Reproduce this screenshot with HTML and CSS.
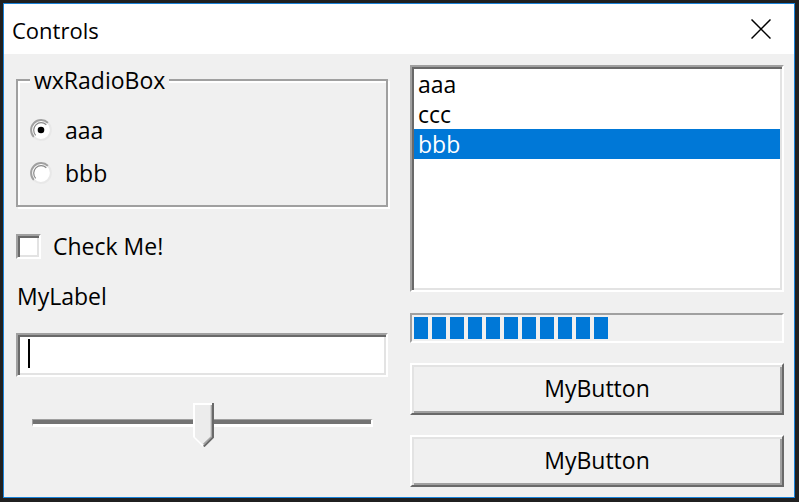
FILE: index.html
```html
<!DOCTYPE html>
<html lang="en">
<head>
<meta charset="utf-8">
<title>Controls</title>
<link rel="stylesheet" href="styles.css">
</head>
<body>
<div class="window">
  <div class="titlebar">
    <span class="title">Controls</span>
    <svg class="close" width="20" height="20" viewBox="0 0 20 20" aria-hidden="true">
      <path d="M0.5 0.5 L19.5 19.5 M19.5 0.5 L0.5 19.5" stroke="#000" stroke-width="1.5" fill="none"/>
    </svg>
  </div>
  <div class="client">
    <div class="col col-left">
      <div class="radiobox">
        <span class="legend">wxRadioBox</span>
        <div class="radios">
          <div class="radio-row">
            <svg class="radio" width="22" height="22" viewBox="0 0 22 22" aria-hidden="true">
              <circle cx="11" cy="11" r="10" fill="#fff"/>
              <path d="M3.93 18.07 A10 10 0 0 1 18.07 3.93" stroke="#a0a0a0" stroke-width="2" fill="none"/>
              <path d="M18.07 3.93 A10 10 0 0 1 3.93 18.07" stroke="#e8e8e8" stroke-width="2" fill="none"/>
              <path d="M5.7 16.3 A7.5 7.5 0 0 1 16.3 5.7" stroke="#8a8a8a" stroke-width="1.2" fill="none"/>
              <circle cx="11" cy="11" r="3.3" fill="#000"/>
            </svg>
            <span>aaa</span>
          </div>
          <div class="radio-row">
            <svg class="radio" width="22" height="22" viewBox="0 0 22 22" aria-hidden="true">
              <circle cx="11" cy="11" r="10" fill="#fff"/>
              <path d="M3.93 18.07 A10 10 0 0 1 18.07 3.93" stroke="#a0a0a0" stroke-width="2" fill="none"/>
              <path d="M18.07 3.93 A10 10 0 0 1 3.93 18.07" stroke="#e8e8e8" stroke-width="2" fill="none"/>
              <path d="M5.7 16.3 A7.5 7.5 0 0 1 16.3 5.7" stroke="#8a8a8a" stroke-width="1.2" fill="none"/>
            </svg>
            <span>bbb</span>
          </div>
        </div>
      </div>
      <div class="check-row">
        <span class="checkbox"></span>
        <span>Check Me!</span>
      </div>
      <div class="label">MyLabel</div>
      <div class="textbox"><span class="caret"></span></div>
      <div class="slider">
        <div class="track"></div>
        <svg class="thumb" width="21" height="44" viewBox="0 0 21 44" aria-hidden="true">
          <polygon points="0,0 21,0 21,34 10.5,44 0,34" fill="#ececec"/>
          <polyline points="1,34.5 1,1 19,1" stroke="#fff" stroke-width="2" fill="none"/>
          <line x1="1.2" y1="34.2" x2="10" y2="43" stroke="#fff" stroke-width="1.6"/>
          <polyline points="20,0 20,34.3 10.8,43.5" stroke="#696969" stroke-width="2" fill="none"/>
          <polyline points="18.3,2 18.3,33.6 10.5,41.3" stroke="#a0a0a0" stroke-width="1.2" fill="none"/>
        </svg>
      </div>
    </div>
    <div class="col col-right">
      <div class="listbox">
        <div class="item">aaa</div>
        <div class="item">ccc</div>
        <div class="item selected">bbb</div>
      </div>
      <div class="progress">
        <span class="chunk"></span><span class="chunk"></span><span class="chunk"></span><span class="chunk"></span><span class="chunk"></span><span class="chunk"></span><span class="chunk"></span><span class="chunk"></span><span class="chunk"></span><span class="chunk"></span><span class="chunk"></span>
      </div>
      <button class="btn">MyButton</button>
      <button class="btn">MyButton</button>
    </div>
  </div>
</div>
</body>
</html>
```

FILE: styles.css
```css
* { box-sizing: border-box; }

html, body {
  margin: 0;
  padding: 0;
  background: #202020;
}

body {
  width: 799px;
  height: 502px;
  overflow: hidden;
  font-family: "Open Sans", "Noto Sans", sans-serif;
  font-size: 23px;
  color: #000;
}

.window {
  margin: 3px 0 0 3px;
  width: 792px;
  height: 495px;
  border: 1px solid #1a82d8;
  background: #f0f0f0;
  display: flex;
  flex-direction: column;
}

.titlebar {
  height: 50px;
  background: #fff;
  display: flex;
  align-items: center;
  justify-content: space-between;
  padding: 0 23px 0 8px;
}

.title {
  font-size: 22px;
  line-height: 30px;
  padding-top: 1px;
}

.close { display: block; }

.client {
  flex: 1;
  display: flex;
  gap: 22px;
  padding: 11px 10px 0 12px;
}

.col {
  display: flex;
  flex-direction: column;
}

.col-left { width: 372px; }
.col-right { width: 374px; }

/* Radio box (etched group frame) */
.radiobox {
  margin-top: 14px;
  height: 128px;
  border: 2px solid #a0a0a0;
  box-shadow: inset 2px 2px 0 #fff, 2px 2px 0 #fff;
  display: flex;
  flex-direction: column;
}

.legend {
  align-self: flex-start;
  margin: -15px 0 0 12px;
  padding: 0 4px;
  height: 28px;
  line-height: 28px;
  background: #f0f0f0;
}

.radios {
  margin-top: 20px;
  padding-left: 12px;
  display: flex;
  flex-direction: column;
  gap: 11px;
}

.radio-row {
  height: 32px;
  display: flex;
  align-items: center;
  gap: 13px;
}

.radio { display: block; flex: none; }

/* Checkbox */
.check-row {
  margin-top: 23px;
  height: 32px;
  display: flex;
  align-items: center;
  gap: 12px;
}

.checkbox {
  width: 25px;
  height: 25px;
  flex: none;
  background: #fff;
  border: 2px solid;
  border-color: #a0a0a0 #fff #fff #a0a0a0;
  box-shadow: inset 2px 2px 0 #696969, inset -2px -2px 0 #e3e3e3;
}

.label {
  margin-top: 18px;
  height: 32px;
  line-height: 32px;
  padding-left: 1px;
}

/* Text input */
.textbox {
  margin-top: 21px;
  height: 44px;
  background: #fff;
  border: 2px solid;
  border-color: #a0a0a0 #fff #fff #a0a0a0;
  box-shadow: inset 2px 2px 0 #696969, inset -2px -2px 0 #e3e3e3;
  padding: 4px 0 0 10px;
}

.caret {
  display: block;
  width: 2px;
  height: 29px;
  background: #000;
}

/* Slider */
.slider {
  position: relative;
  margin-top: 24px;
  height: 48px;
}

.track {
  margin: 18px 15px 0 16px;
  height: 8px;
  background: #737373;
  border-top: 1px solid #a0a0a0;
  border-left: 1px solid #a0a0a0;
  border-right: 2px solid #fff;
  border-bottom: 3px solid #fff;
}

.thumb {
  position: absolute;
  left: 177px;
  top: 2px;
  display: block;
}

/* List box */
.listbox {
  height: 227px;
  background: #fff;
  border: 2px solid;
  border-color: #a0a0a0 #fff #fff #a0a0a0;
  box-shadow: inset 2px 2px 0 #696969, inset -2px -2px 0 #e3e3e3;
  padding: 2px;
}

.item {
  height: 30px;
  line-height: 30px;
  padding-left: 4px;
}

.item.selected {
  background: #0078d7;
  color: #fff;
}

/* Progress bar */
.progress {
  margin-top: 21px;
  height: 30px;
  border: 2px solid;
  border-color: #a0a0a0 #fff #fff #a0a0a0;
  background: #f0f0f0;
  padding: 2px;
  display: flex;
  gap: 4px;
}

.chunk {
  width: 14px;
  height: 22px;
  background: #0078d7;
}

/* Buttons */
.btn {
  margin-top: 20px;
  height: 52px;
  width: 100%;
  font: inherit;
  color: #000;
  background: #f0f0f0;
  border: 2px solid;
  border-color: #fff #696969 #696969 #fff;
  box-shadow: inset 2px 2px 0 #e3e3e3, inset -2px -2px 0 #a0a0a0;
  padding: 0 0 2px 0;
  line-height: 30px;
}
```
